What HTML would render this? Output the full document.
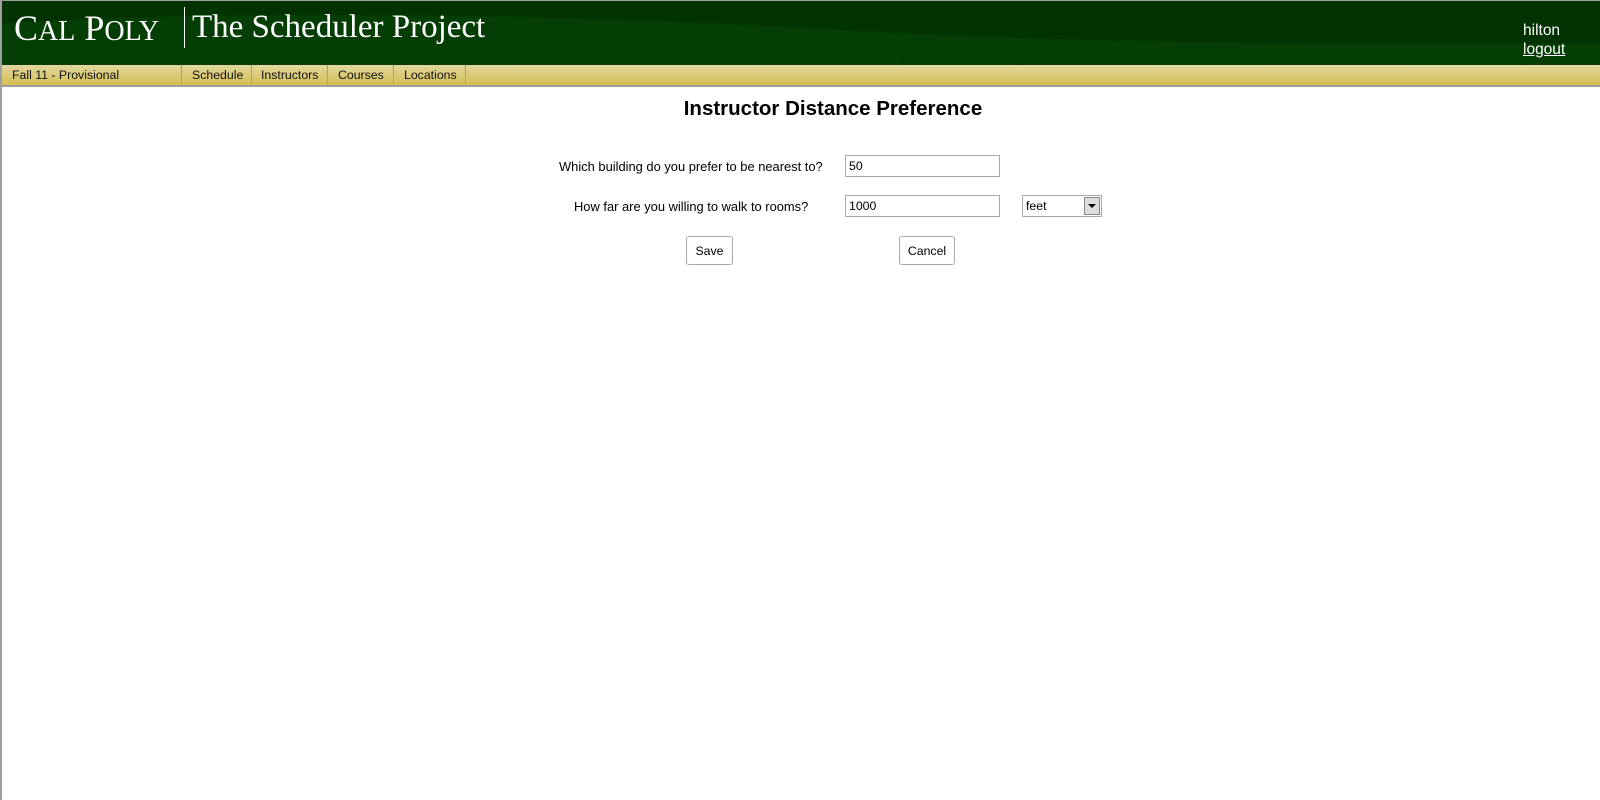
<!DOCTYPE html>
<html><head><style>
body{margin:0;width:1600px;height:800px;overflow:hidden;background:#fff;font-family:"Liberation Sans",Arial,sans-serif;position:relative}
.frame{position:absolute;left:0;top:0;width:2px;height:800px;background:#a0a0a0}
.top{position:absolute;left:0;top:0;width:1600px;height:1px;background:#a0a0a0}
.hdr{position:absolute;left:0;top:1px;width:1600px;height:64px;background:#003300;overflow:hidden}
.nav{position:absolute;left:2px;top:65px;width:1598px;height:20px;background:linear-gradient(#e2d8a0,#d4be52)}
.line{position:absolute;left:0;top:85px;width:1600px;height:2px;background:#a0a0a0}
.n{position:absolute;top:68px;font-size:12.3px;color:#111}
.sep{position:absolute;top:65px;width:1px;height:20px;background:#b8a440}
.abs{position:absolute}
.inp{position:absolute;border:1px solid #aaa;font-size:12.3px;line-height:20px;padding-left:3px;box-sizing:border-box;height:22px}
.btn{position:absolute;border:1px solid #aaa;border-radius:3px;font-size:12.3px;text-align:center;line-height:28px;height:29px;box-sizing:border-box;background:#fff}
</style></head><body>
<div class="hdr">
<svg width="1600" height="64" style="position:absolute;left:0;top:0">
<path d="M0 22 Q400 2 900 32 Q1200 46 1600 42 L1600 64 L0 64Z" fill="#0a4a0a" opacity="0.5"/>
<path d="M0 48 Q500 32 900 52 L900 64 L0 64Z" fill="#064006" opacity="0.5"/>
</svg>
<div class="abs" style="left:14px;top:6px;color:#fff;font-family:'Liberation Serif',serif;font-size:36px">C<span style="font-size:28px">AL</span> P<span style="font-size:28px">OLY</span></div>
<div class="abs" style="left:184px;top:6px;width:1px;height:41px;background:#fff"></div>
<div class="abs" style="left:192px;top:8px;color:#fff;font-family:'Liberation Serif',serif;font-size:33px">The Scheduler Project</div>
<div class="abs" style="left:1523px;top:21px;color:#fff;font-size:15.5px">hilton</div>
<div class="abs" style="left:1523px;top:40px;color:#fff;font-size:15.5px;text-decoration:underline">logout</div>
</div>
<div class="nav"></div>
<div class="n" style="left:12px">Fall 11 - Provisional</div>
<div class="sep" style="left:181px"></div>
<div class="n" style="left:192px">Schedule</div>
<div class="sep" style="left:251px"></div>
<div class="n" style="left:261px">Instructors</div>
<div class="sep" style="left:327px"></div>
<div class="n" style="left:338px">Courses</div>
<div class="sep" style="left:393px"></div>
<div class="n" style="left:404px">Locations</div>
<div class="sep" style="left:465px"></div>
<div class="line"></div>
<div class="top"></div><div class="frame"></div>
<div class="abs" style="left:0;width:1666px;text-align:center;top:97px;font-size:20.5px;font-weight:bold">Instructor Distance Preference</div>
<div class="abs" style="left:559px;top:159px;font-size:12.9px">Which building do you prefer to be nearest to?</div>
<div class="abs" style="left:574px;top:199px;font-size:12.9px">How far are you willing to walk to rooms?</div>
<div class="inp" style="left:845px;top:155px;width:155px">50</div>
<div class="inp" style="left:845px;top:195px;width:155px">1000</div>
<div class="inp" style="left:1022px;top:195px;width:80px">feet
<div class="abs" style="right:1px;top:1px;width:16px;height:18px;background:#ddd;border:1px solid #888;box-sizing:border-box"><div class="abs" style="left:3px;top:6px;border-left:4px solid transparent;border-right:4px solid transparent;border-top:4px solid #000"></div></div></div>
<div class="btn" style="left:686px;top:236px;width:47px">Save</div>
<div class="btn" style="left:899px;top:236px;width:56px">Cancel</div>
</body></html>
